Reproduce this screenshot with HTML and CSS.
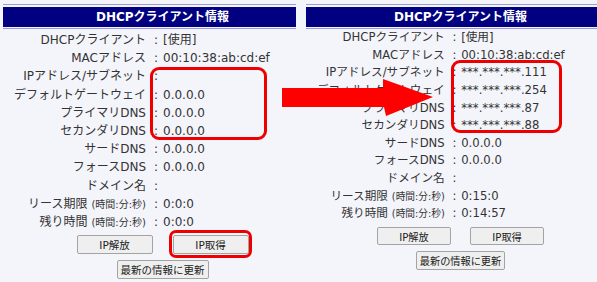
FILE: index.html
```html
<!DOCTYPE html>
<html>
<head>
  <meta charset="utf-8">
  <title>DHCPクライアント情報</title>
  <link rel="stylesheet" href="styles.css">
</head>
<body>
  <div class="shot">
    <section class="panel">
      <div class="sheet">
        <div class="head"><div class="head-bar">DHCPクライアント情報</div></div>
        <div class="body">
          <div class="row"><span class="lbl">DHCPクライアント</span><span class="sep">:</span><span class="val">[使用]</span></div>
          <div class="row"><span class="lbl">MACアドレス</span><span class="sep">:</span><span class="val">00:10:38:ab:cd:ef</span></div>
          <div class="row"><span class="lbl">IPアドレス/サブネット</span><span class="sep">:</span><span class="val"></span></div>
          <div class="row"><span class="lbl">デフォルトゲートウェイ</span><span class="sep">:</span><span class="val">0.0.0.0</span></div>
          <div class="row"><span class="lbl">プライマリDNS</span><span class="sep">:</span><span class="val">0.0.0.0</span></div>
          <div class="row"><span class="lbl">セカンダリDNS</span><span class="sep">:</span><span class="val">0.0.0.0</span></div>
          <div class="row"><span class="lbl">サードDNS</span><span class="sep">:</span><span class="val">0.0.0.0</span></div>
          <div class="row"><span class="lbl">フォースDNS</span><span class="sep">:</span><span class="val">0.0.0.0</span></div>
          <div class="row"><span class="lbl">ドメイン名</span><span class="sep">:</span><span class="val"></span></div>
          <div class="row"><span class="lbl">リース期限<small>(時間:分:秒)</small></span><span class="sep">:</span><span class="val">0:0:0</span></div>
          <div class="row"><span class="lbl">残り時間<small>(時間:分:秒)</small></span><span class="sep">:</span><span class="val">0:0:0</span></div>
          <div class="btns">
            <button>IP解放</button>
            <button>IP取得</button>
          </div>
          <div class="btns">
            <button class="wide">最新の情報に更新</button>
          </div>
        </div>
      </div>
    </section>

    <section class="panel panel-after">
      <div class="sheet">
        <div class="head"><div class="head-bar">DHCPクライアント情報</div></div>
        <div class="body">
          <div class="row"><span class="lbl">DHCPクライアント</span><span class="sep">:</span><span class="val">[使用]</span></div>
          <div class="row"><span class="lbl">MACアドレス</span><span class="sep">:</span><span class="val">00:10:38:ab:cd:ef</span></div>
          <div class="row"><span class="lbl">IPアドレス/サブネット</span><span class="sep">:</span><span class="val">***.***.***.111</span></div>
          <div class="row"><span class="lbl">デフォルトゲートウェイ</span><span class="sep">:</span><span class="val">***.***.***.254</span></div>
          <div class="row"><span class="lbl">プライマリDNS</span><span class="sep">:</span><span class="val">***.***.***.87</span></div>
          <div class="row"><span class="lbl">セカンダリDNS</span><span class="sep">:</span><span class="val">***.***.***.88</span></div>
          <div class="row"><span class="lbl">サードDNS</span><span class="sep">:</span><span class="val">0.0.0.0</span></div>
          <div class="row"><span class="lbl">フォースDNS</span><span class="sep">:</span><span class="val">0.0.0.0</span></div>
          <div class="row"><span class="lbl">ドメイン名</span><span class="sep">:</span><span class="val"></span></div>
          <div class="row"><span class="lbl">リース期限<small>(時間:分:秒)</small></span><span class="sep">:</span><span class="val">0:15:0</span></div>
          <div class="row"><span class="lbl">残り時間<small>(時間:分:秒)</small></span><span class="sep">:</span><span class="val">0:14:57</span></div>
          <div class="btns">
            <button>IP解放</button>
            <button>IP取得</button>
          </div>
          <div class="btns">
            <button class="wide">最新の情報に更新</button>
          </div>
        </div>
      </div>
    </section>

    <!-- annotations drawn over the screenshots -->
    <div class="mark mark-before"></div>
    <div class="mark mark-after"></div>
    <div class="mark mark-button"></div>
    <svg class="arrow" width="160" height="50" viewBox="280 75 160 50">
      <polygon points="282,88 383,88 383,79 433,97 386,116 384,107 282,107" fill="#ff0000"/>
    </svg>
  </div>
</body>
</html>
```

FILE: styles.css
```css
:root {
  --bg-color: #f4f5fb;
  --text-color: #333;
  --navy: #000080;
  --line: #9a9ad4;
  --mark: #ee0000;
}

body {
  margin: 0;
  background-color: var(--bg-color);
  color: var(--text-color);
  font-family: "DejaVu Sans", "Noto Sans CJK JP", sans-serif;
  font-size: 12px;
}

.shot {
  position: relative;
  display: flex;
  gap: 10px;
  padding-left: 3px;
  height: 282px;
  overflow: hidden;
}

.panel {
  width: 293px;
  overflow: hidden;
  padding-top: 4px;
  flex-shrink: 0;
}

.panel-after {
  width: 291px;
}

.sheet {
  width: 319px;
}

.panel-after .sheet {
  width: 309px;
}

.head {
  border-top: 1px solid var(--line);
  border-bottom: 1px solid var(--line);
  padding: 2px 0 1px;
}

.head-bar {
  background-color: var(--navy);
  color: #fff;
  font-weight: bold;
  height: 20px;
  line-height: 20px;
  text-align: center;
}

.body {
  margin-top: 2px;
}

.panel-after .body {
  margin-top: 0;
  zoom: 0.97;
}

.row {
  display: grid;
  grid-template-columns: 143px 17px 1fr;
  height: 18.2px;
  line-height: 18.2px;
  white-space: nowrap;
}

.lbl {
  text-align: right;
}

.lbl small {
  font-size: 10px;
  margin-left: 4px;
}

.sep {
  padding-left: 8px;
}

.btns {
  display: flex;
  justify-content: center;
  gap: 20px;
  margin-top: 4px;
}

.btns + .btns {
  margin-top: 6px;
}

button {
  width: 76px;
  height: 19px;
  padding: 0;
  background-color: #efefef;
  border: 1px solid #a3a3a3;
  border-radius: 2px;
  color: #222;
  font-family: "DejaVu Sans", "Noto Sans CJK JP", sans-serif;
  font-size: 10.5px;
}

button.wide {
  width: 92px;
}

.mark {
  position: absolute;
  box-sizing: border-box;
  border: 3px solid var(--mark);
  border-radius: 9px;
}

.mark-before {
  left: 150px;
  top: 67px;
  width: 117px;
  height: 73px;
}

.mark-after {
  left: 451px;
  top: 60px;
  width: 111px;
  height: 73px;
}

.mark-button {
  left: 169px;
  top: 230px;
  width: 83px;
  height: 28px;
  border-radius: 7px;
}

.arrow {
  position: absolute;
  left: 280px;
  top: 75px;
}
```
